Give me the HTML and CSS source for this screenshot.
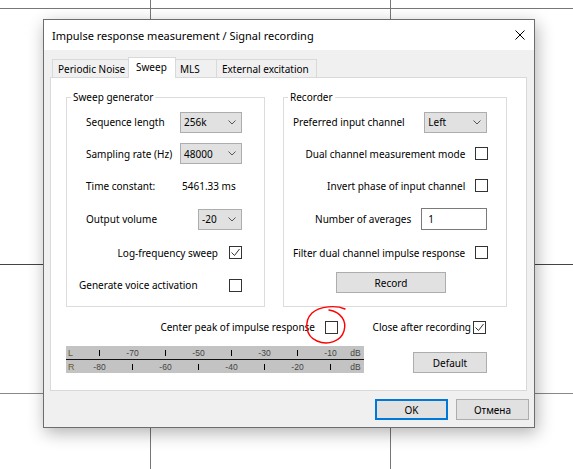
FILE: index.html
```html
<!DOCTYPE html>
<html lang="en">

<head>
    <meta charset="UTF-8">
    <meta name="viewport" content="width=device-width, initial-scale=1.0">
    <title>Impulse response measurement</title>
    <link rel="stylesheet" href="styles.css">
</head>

<body>
    <div class="desktop">
        <div class="dialog">
            <div class="titlebar">
                <span class="title">Impulse response measurement / Signal recording</span>
                <svg class="close" width="10" height="10" viewBox="0 0 10 10">
                    <path d="M0.5 0.5L9.5 9.5M9.5 0.5L0.5 9.5" stroke="#000" stroke-width="1" />
                </svg>
            </div>
            <div class="client">
                <div class="tabs">
                    <div class="tab t-periodic">Periodic Noise</div>
                    <div class="tab t-sweep active">Sweep</div>
                    <div class="tab t-mls">MLS</div>
                    <div class="tab t-ext">External excitation</div>
                </div>
                <div class="panel">
                    <div class="groups">
                        <fieldset class="group sweep">
                            <legend>Sweep generator</legend>
                            <div class="rows">
                                <div class="row">
                                    <span>Sequence length</span>
                                    <div class="combo c-len">256k<svg width="8" height="5" viewBox="0 0 8 5"><path d="M0.5 0.5L4 4L7.5 0.5" fill="none" stroke="#555" /></svg></div>
                                </div>
                                <div class="row">
                                    <span>Sampling rate (Hz)</span>
                                    <div class="combo c-len">48000<svg width="8" height="5" viewBox="0 0 8 5"><path d="M0.5 0.5L4 4L7.5 0.5" fill="none" stroke="#555" /></svg></div>
                                </div>
                                <div class="row">
                                    <span>Time constant:</span>
                                    <span class="value">5461.33 ms</span>
                                </div>
                                <div class="row">
                                    <span>Output volume</span>
                                    <div class="combo c-vol">-20<svg width="8" height="5" viewBox="0 0 8 5"><path d="M0.5 0.5L4 4L7.5 0.5" fill="none" stroke="#555" /></svg></div>
                                </div>
                                <div class="row end">
                                    <span>Log-frequency sweep</span>
                                    <span class="cb"><svg width="11" height="11" viewBox="0 0 11 11"><path d="M1.5 5.5L4.5 8.5L9.5 2" fill="none" stroke="#333" /></svg></span>
                                </div>
                                <div class="row voice">
                                    <span>Generate voice activation</span>
                                    <span class="cb"></span>
                                </div>
                            </div>
                        </fieldset>
                        <fieldset class="group recorder">
                            <legend>Recorder</legend>
                            <div class="rows">
                                <div class="row">
                                    <span>Preferred input channel</span>
                                    <div class="combo c-chan">Left<svg width="8" height="5" viewBox="0 0 8 5"><path d="M0.5 0.5L4 4L7.5 0.5" fill="none" stroke="#555" /></svg></div>
                                </div>
                                <div class="row end">
                                    <span>Dual channel measurement mode</span>
                                    <span class="cb"></span>
                                </div>
                                <div class="row end">
                                    <span>Invert phase of input channel</span>
                                    <span class="cb"></span>
                                </div>
                                <div class="row end">
                                    <span>Number of averages</span>
                                    <div class="edit">1</div>
                                </div>
                                <div class="row end">
                                    <span>Filter dual channel impulse response</span>
                                    <span class="cb"></span>
                                </div>
                                <div class="row rec">
                                    <button class="btn btn-record">Record</button>
                                </div>
                            </div>
                        </fieldset>
                    </div>

                    <div class="options">
                        <div class="peak">
                            <span>Center peak of impulse response</span>
                            <span class="cb"></span>
                        </div>
                        <div class="after">
                            <span>Close after recording</span>
                            <span class="cb"><svg width="11" height="11" viewBox="0 0 11 11"><path d="M1.5 5.5L4.5 8.5L9.5 2" fill="none" stroke="#333" /></svg></span>
                        </div>
                    </div>

                    <div class="meter-row">
                        <div class="meter">
                            <span class="ch">L</span>
                            <i class="tick"></i><span>-70</span><i class="tick"></i><span>-50</span>
                            <i class="tick"></i><span>-30</span><i class="tick"></i><span>-10</span>
                            <span class="db">dB</span>
                            <span class="ch">R</span>
                            <span>-80</span><i class="tick"></i><span>-60</span><i class="tick"></i>
                            <span>-40</span><i class="tick"></i><span>-20</span><i class="tick"></i>
                            <span class="db">dB</span>
                        </div>
                        <button class="btn btn-default">Default</button>
                    </div>

                    <!-- red pen note round the checkbox -->
                    <svg class="note" width="56" height="48" viewBox="300 300 56 48">
                        <path d="M345 309C336 305 320 306 312 313C304 321 305 336 317 341C328 346 341 341 344 331C347 321 341 312 329 310" fill="none" stroke="#f00" stroke-width="1.4" stroke-linecap="round" />
                    </svg>
                </div>
                <div class="buttons">
                    <button class="btn btn-ok">OK</button>
                    <button class="btn">Отмена</button>
                </div>
            </div>
        </div>
    </div>
</body>

</html>
```

FILE: styles.css
```css
* {
    margin: 0;
    padding: 0;
}

body {
    font-family: "Noto Sans", "DejaVu Sans", sans-serif;
    font-size: 10px;
    color: #000;
}

.desktop {
    width: 573px;
    height: 469px;
    overflow: hidden;
    box-sizing: border-box;
    padding-top: 19px;
    background:
        linear-gradient(#777, #777) 0 8px / 100% 1px no-repeat,
        linear-gradient(#444, #444) 0 264px / 100% 1px no-repeat,
        linear-gradient(#888, #888) 0 393px / 100% 1px no-repeat,
        linear-gradient(#777, #777) 150px 0 / 1px 100% no-repeat,
        linear-gradient(#777, #777) 390px 0 / 1px 100% no-repeat,
        #fff;
}

.dialog {
    margin-left: 43px;
    width: 492px;
    height: 409px;
    box-sizing: border-box;
    border: 1px solid #6d6d6d;
    background: #f0f0f0;
    box-shadow: 2px 5px 16px rgba(0, 0, 0, 0.3);
    display: flex;
    flex-direction: column;
}

.titlebar {
    height: 30px;
    background: #fff;
    display: flex;
    align-items: center;
    padding-left: 8px;
    font-size: 11px;
}

.close {
    margin-left: auto;
    margin-right: 9px;
}

.client {
    flex: 1;
    padding: 7px 6px 0 6px;
    display: flex;
    flex-direction: column;
}

/* tab strip */
.tabs {
    height: 20px;
    display: flex;
    align-items: flex-end;
    margin-left: 2px;
}

.tab {
    height: 18px;
    box-sizing: border-box;
    border: 1px solid #d9d9d9;
    border-bottom: 0;
    padding-left: 5px;
    margin-left: -1px;
    display: flex;
    align-items: center;
    white-space: nowrap;
}

.tab:first-child {
    margin-left: 0;
}

.t-periodic { width: 77px; }
.t-sweep { width: 48px; }
.t-mls { width: 42px; padding-left: 4px; }
.t-ext { width: 101px; }

.tab.active {
    height: 21px;
    background: #fff;
    padding-left: 7px;
    padding-bottom: 2px;
    margin-bottom: -1px;
    position: relative;
    z-index: 1;
}

.panel {
    height: 314px;
    box-sizing: border-box;
    border: 1px solid #d9d9d9;
    background: #fff;
    margin-right: 1px;
    padding-top: 12px;
    position: relative;
}

.groups {
    display: flex;
    gap: 18px;
    padding-left: 15px;
}

.group {
    box-sizing: border-box;
    border: 1px solid #dcdcdc;
    padding: 0 0 5px;
    min-width: 0;
}

.group legend {
    margin-left: 4px;
    padding: 0 2px;
    line-height: 14px;
}

.sweep { width: 199px; }
.recorder { width: 224px; }

.rows {
    display: grid;
    grid-template-rows: 32px 31px 33px 34px 33px 32px;
    margin-top: 2px;
}

.row {
    display: flex;
    align-items: center;
    white-space: nowrap;
}

.row > :last-child {
    margin-left: auto;
}

.row.end {
    justify-content: flex-end;
    gap: 10px;
}

.row.end > :last-child,
.row.rec > :last-child {
    margin-left: 0;
}

.sweep .row {
    padding: 0 22px 0 19px;
}

.sweep .row.end {
    gap: 11px;
}

.sweep .row.voice {
    padding-left: 12px;
}

.recorder .row {
    padding: 0 22px 0 9px;
}

.recorder .row.rec {
    align-items: flex-start;
    padding: 3px 0 0 52px;
}

.value {
    width: 60px;
}

/* windows style controls */
.combo {
    height: 21px;
    box-sizing: border-box;
    border: 1px solid #adadad;
    background: #e1e1e1;
    display: flex;
    align-items: center;
    justify-content: space-between;
    padding: 0 5px 0 3px;
}

.c-len { width: 62px; }
.c-vol { width: 44px; }
.c-chan { width: 63px; margin-right: 1px; }

.cb {
    width: 13px;
    height: 13px;
    box-sizing: border-box;
    border: 1px solid #333;
    background: #fff;
    display: flex;
}

.edit {
    width: 66px;
    height: 22px;
    box-sizing: border-box;
    border: 1px solid #7a7a7a;
    background: #fff;
    padding-left: 6px;
    display: flex;
    align-items: center;
    margin-right: 1px;
}

.btn {
    height: 21px;
    box-sizing: border-box;
    border: 1px solid #adadad;
    background: #e1e1e1;
    font-family: inherit;
    font-size: 10px;
    color: #000;
}

.btn-record { width: 110px; }

.btn-default {
    width: 74px;
    margin-left: auto;
    margin-top: 6px;
}

.options {
    display: flex;
    align-items: center;
    height: 20px;
    margin-top: 10px;
    white-space: nowrap;
}

.peak {
    width: 287px;
    display: flex;
    justify-content: flex-end;
    align-items: center;
    gap: 10px;
}

.after {
    flex: 1;
    display: flex;
    justify-content: flex-end;
    align-items: center;
    gap: 2px;
    padding-right: 40px;
}

.meter-row {
    display: flex;
    align-items: flex-start;
    margin-top: 9px;
    padding: 0 39px 0 15px;
}

/* level meter, left and right channel */
.meter {
    width: 298px;
    height: 27px;
    display: grid;
    grid-template-columns: 17px repeat(8, 33px) 17px;
    grid-template-rows: 14px 13px;
    background: linear-gradient(#111, #111) 0 13px / 100% 1px no-repeat, #c3c3c3;
    font-family: "Liberation Sans", sans-serif;
    font-size: 8.5px;
    color: #444;
    text-align: center;
    line-height: 13px;
}

.meter span {
    padding-top: 1px;
}

.meter .ch {
    text-align: left;
    padding-left: 2px;
    font-size: 9px;
    color: #6e5a2c;
}

.tick {
    justify-self: center;
    align-self: center;
    width: 1px;
    height: 6px;
    background: #000;
}

.note {
    position: absolute;
    left: 249px;
    top: 222px;
}

.buttons {
    display: flex;
    justify-content: flex-end;
    gap: 8px;
    margin-top: 8px;
    margin-right: -1px;
}

.buttons .btn {
    width: 73px;
}

.btn-ok {
    border: 2px solid #0078d7;
}
```
